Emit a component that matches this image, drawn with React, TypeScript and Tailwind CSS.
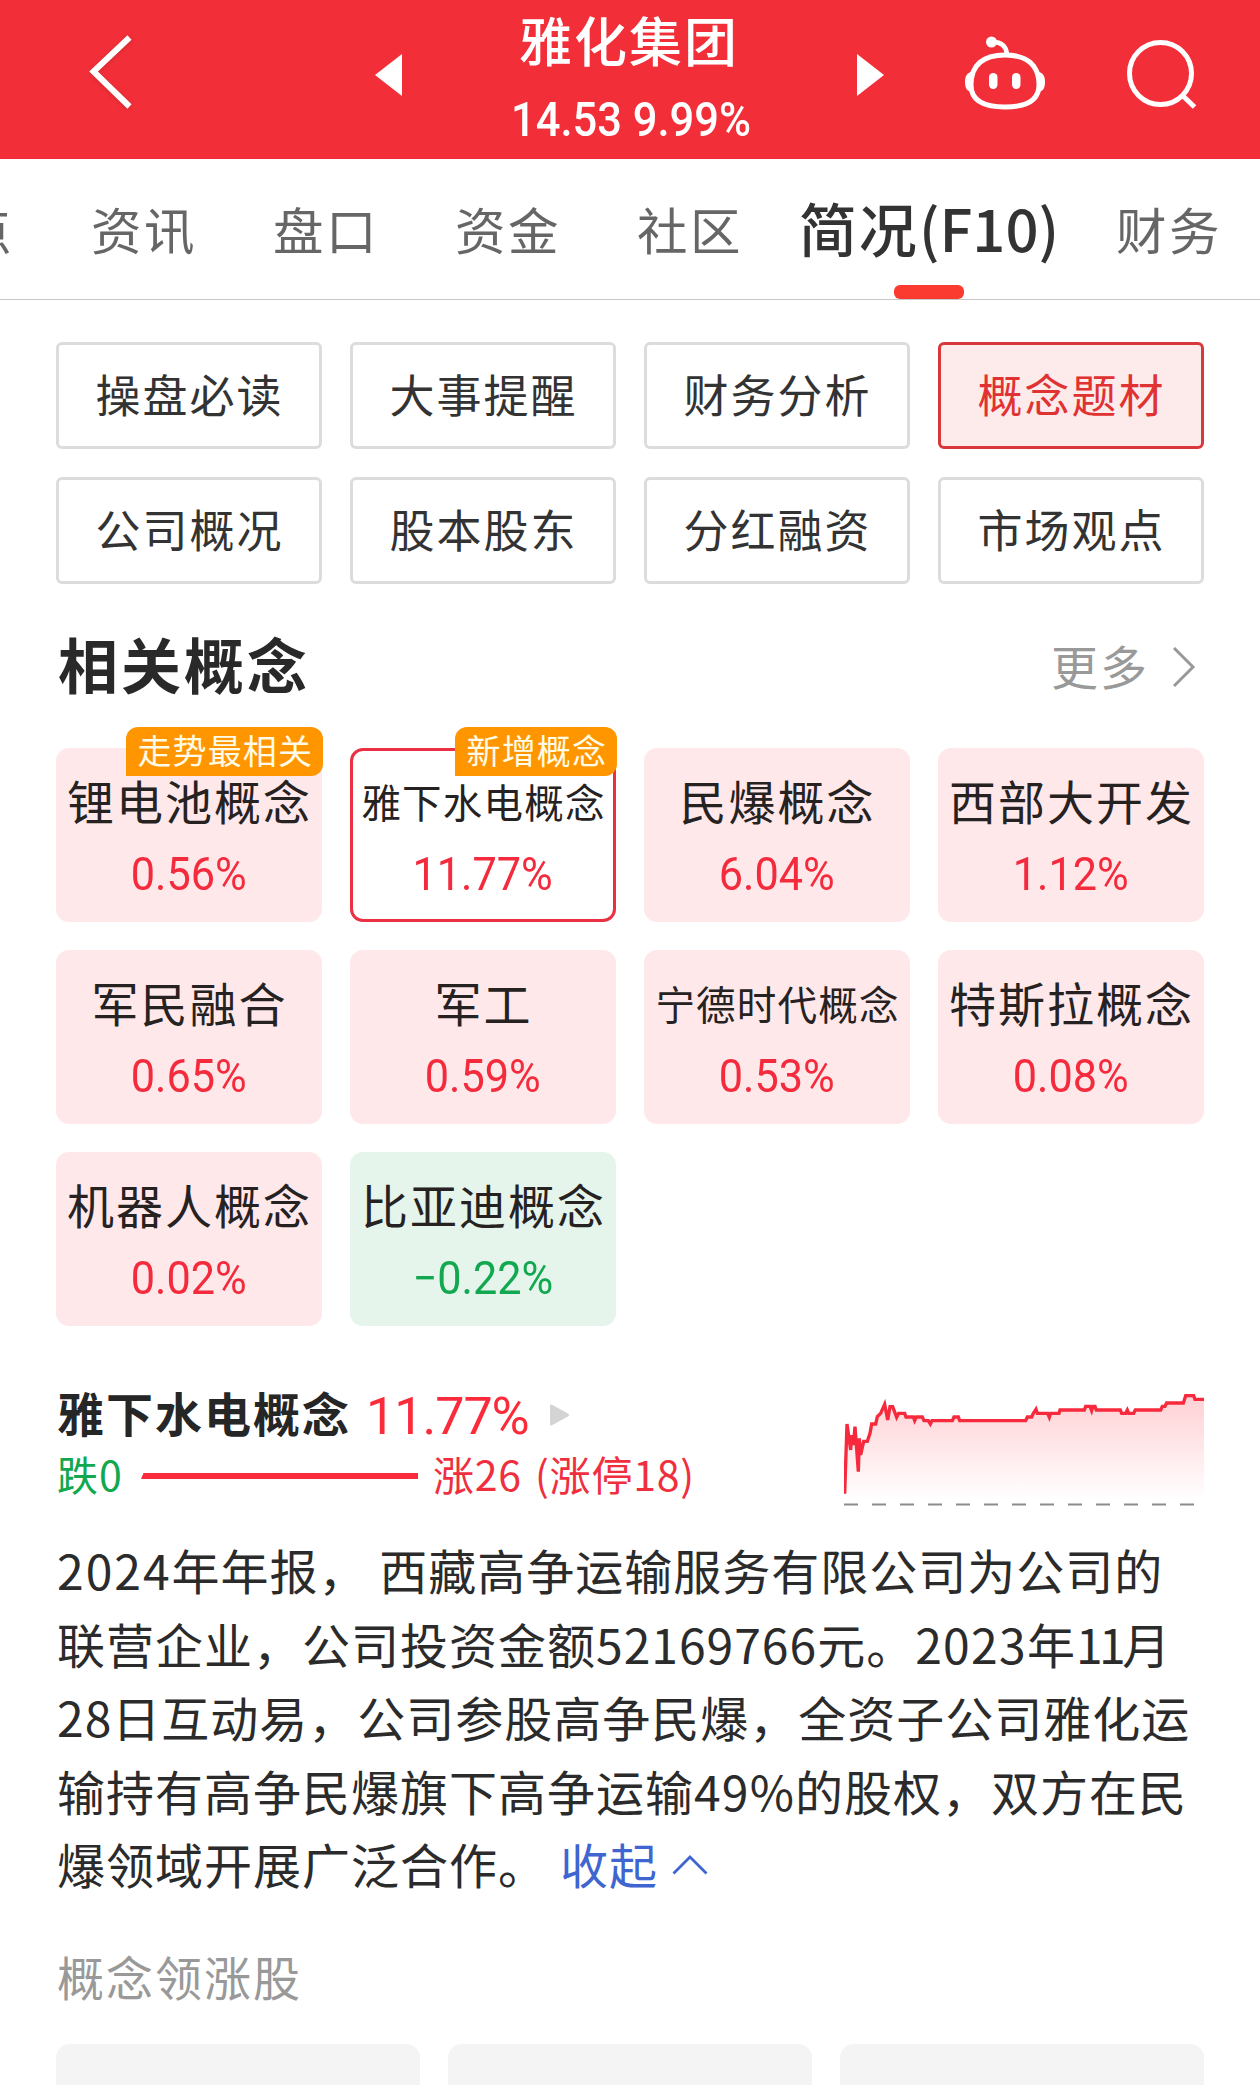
import type { ReactNode } from "react";

const NAV = ["操盘必读", "大事提醒", "财务分析", "概念题材", "公司概况", "股本股东", "分红融资", "市场观点"];

type Concept = { name: string; pct: string; badge?: string; active?: boolean; down?: boolean };

const CONCEPTS: Concept[] = [
  { name: "锂电池概念", pct: "0.56%", badge: "走势最相关" },
  { name: "雅下水电概念", pct: "11.77%", badge: "新增概念", active: true },
  { name: "民爆概念", pct: "6.04%" },
  { name: "西部大开发", pct: "1.12%" },
  { name: "军民融合", pct: "0.65%" },
  { name: "军工", pct: "0.59%" },
  { name: "宁德时代概念", pct: "0.53%" },
  { name: "特斯拉概念", pct: "0.08%" },
  { name: "机器人概念", pct: "0.02%" },
  { name: "比亚迪概念", pct: "−0.22%", down: true },
];

const TREND =
  "2,371 9,162 20,240 23,195 28,225 33,170 43,305 46,205 50,255 59,214 70,214 78,190 83,162 95,162 100,140 110,130 122,103 131,150 138,110 146,110 158,142 164,130 182,130 186,141 208,141 212,152 217,141 235,141 240,152 253,152 259,162 264,152 325,152 330,141 343,141 347,152 545,152 550,141 563,141 568,130 576,118 580,130 611,130 616,142 620,130 645,130 648,120 721,120 725,109 738,109 743,122 747,109 753,109 757,120 829,120 833,130 845,130 850,120 854,130 869,130 874,120 950,120 955,109 963,109 968,99 1018,99 1025,77 1049,77 1053,88 1080,88";

function Header() {
  return (
    <header className="flex h-[159px] items-start bg-[#f22f38] text-white">
      <svg className="mt-[32px] ml-[86px] h-[80px] w-[50px] drop-shadow-sm" viewBox="0 0 50 80" fill="none">
        <path d="M43.500 5.500 7.500 39.500l36 35" stroke="#fff" strokeWidth="6" />
      </svg>
      <svg className="mt-[54px] ml-[239px] h-[42px] w-[27px]" viewBox="0 0 27 42">
        <path d="M27 0v42L0 21z" fill="#fff" />
      </svg>
      <div className="flex w-[455px] flex-col items-center">
        <div className="mt-[4px] pr-px text-[53px] leading-[70px] font-medium tracking-[2px]">雅化集团</div>
        <div className="mt-[10px] origin-center scale-x-[0.888] pl-[3px] font-['Roboto'] text-[49px] leading-[72px] font-medium whitespace-nowrap">
          14.53 9.99%
        </div>
      </div>
      <svg className="mt-[54px] h-[42px] w-[27px]" viewBox="0 0 27 42">
        <path d="M0 0v42l27-21z" fill="#fff" />
      </svg>
      <svg className="mt-[34px] ml-[79px] h-[80px] w-[84px]" viewBox="0 0 84 80" fill="none">
        <circle cx="28.500" cy="8" r="5.500" fill="#fff" />
        <path d="M30 8c8 0 13 4 14 12" stroke="#fff" strokeWidth="4.500" />
        <path
          d="M42 21c22 0 34 10 34 30 0 14-10 22-34 22S8 65 8 51c0-20 12-30 34-30z"
          stroke="#fff"
          strokeWidth="5"
        />
        <path d="M8 38c-4 1-6 4-6 10s2 9 6 10zM76 38c4 1 6 4 6 10s-2 9-6 10z" fill="#fff" />
        <rect x="26" y="39" width="8.500" height="16" rx="4.200" fill="#fff" />
        <rect x="49" y="39" width="8.500" height="16" rx="4.200" fill="#fff" />
      </svg>
      <svg className="mt-[38px] ml-[78px] h-[76px] w-[76px]" viewBox="0 0 76 76" fill="none">
        <ellipse cx="35.500" cy="35.500" rx="31" ry="31" stroke="#fff" strokeWidth="5" />
        <path d="M57 57l12.500 12" stroke="#fff" strokeWidth="5" />
      </svg>
    </header>
  );
}

function Tab({ children }: { children: ReactNode }) {
  return <span className="w-[105px] shrink-0 text-[50.500px] leading-[60px] tracking-[2.500px] whitespace-nowrap text-[#666]">{children}</span>;
}

function Tabs() {
  return (
    <nav className="flex h-[141px] items-start gap-[77px] overflow-hidden border-b border-[#c8c8cb] pt-[39px]">
      <span className="-ml-[91px] w-[105px] shrink-0 text-right text-[50px] leading-[60px] tracking-[2.5px] text-[#666]">点</span>
      <Tab>资讯</Tab>
      <Tab>盘口</Tab>
      <Tab>资金</Tab>
      <Tab>社区</Tab>
      <div className="-mx-[21px] -mt-[5px] flex w-[262px] shrink-0 flex-col items-center">
        <span className="text-[58px] leading-[68px] font-medium tracking-[2px] whitespace-nowrap text-[#333]">
          简况<span className="tracking-[0px]">(F10)</span>
        </span>
        <span className="mt-[24px] h-[14px] w-[70px] rounded-[6px] bg-[#fb3b30]" />
      </div>
      <Tab>财务</Tab>
    </nav>
  );
}

function ConceptCard({ c }: { c: Concept }) {
  const tone = c.active ? "border-[3px] border-[#ea3042] bg-white" : c.down ? "bg-[#e5f5eb]" : "bg-[#ffe8ea]";
  const size = c.name.length > 5 ? "pt-[2px] text-[39.5px] tracking-[1.2px]" : "pb-[1px] text-[47px] tracking-[2px]";
  return (
    <div className={`relative flex h-[174px] items-center justify-center rounded-[13px] ${tone}`}>
      <div className="flex flex-col items-center">
        <div className={`flex h-[60px] items-center pl-px leading-none whitespace-nowrap text-[#262222] ${size}`}>{c.name}</div>
        <div
          className={`mt-[14px] -mb-[4px] h-[60px] scale-x-[0.94] font-['Roboto'] text-[46px] leading-[60px] ${c.down ? "text-[#12a850]" : "text-[#f42b3d]"}`}
        >
          {c.pct}
        </div>
      </div>
      {c.badge && (
        <div
          className={`absolute flex h-[49px] items-center rounded-t-[12px] rounded-br-[12px] bg-[#ff9600] pr-[10px] pb-[3px] pl-[12px] text-[34px] leading-none tracking-[1.1px] whitespace-nowrap text-[#fffbe6] ${c.active ? "-top-[24px] -right-[4px]" : "-top-[21px] -right-px"}`}
        >
          {c.badge}
        </div>
      )}
    </div>
  );
}

function TrendChart() {
  return (
    <svg className="h-[150px] w-[360px]" viewBox="0 0 1080 450" fill="none">
      <defs>
        <linearGradient id="trend" x1="0" y1="77" x2="0" y2="390" gradientUnits="userSpaceOnUse">
          <stop offset="0" stopColor="#ff2a3c" stopOpacity="0.22" />
          <stop offset="1" stopColor="#ff2a3c" stopOpacity="0" />
        </linearGradient>
      </defs>
      <polygon points={`2,390 ${TREND} 1080,390`} fill="url(#trend)" />
      <polyline points={TREND} stroke="#f62a3c" strokeWidth="10" />
      <path d="M0 403.500H1080" stroke="#8c8c8c" strokeWidth="6" strokeDasharray="42 42" />
    </svg>
  );
}

export default function App() {
  return (
    <div className="h-[2085px] w-[1260px] overflow-hidden bg-white font-['Noto_Sans_CJK_SC',sans-serif]">
      <Header />
      <Tabs />
      <main className="px-[56px]">
        <div className="mt-[42px] grid grid-cols-4 gap-[28px]">
          {NAV.map((n) => (
            <div
              key={n}
              className={`flex h-[107px] items-center justify-center rounded-[6px] border-[3px] pb-[5px] pl-px text-[45px] leading-none tracking-[2px] ${
                n === "概念题材" ? "border-[#d8383c] bg-[#fdeaea] text-[#e03232]" : "border-[#dcdcdc] text-[#333]"
              }`}
            >
              {n}
            </div>
          ))}
        </div>

        <div className="mt-[38px] flex h-[90px] items-center justify-between">
          <h2 className="pb-[8px] pl-[2px] text-[60px] leading-none font-bold tracking-[3px] text-[#292929]">相关概念</h2>
          <div className="flex items-center text-[#999]">
            <span className="pb-[6px] text-[47px] leading-none tracking-[2px]">更多</span>
            <svg className="mr-[8px] ml-[23px] h-[42px] w-[24px]" viewBox="0 0 24 42" fill="none">
              <path d="M2 2l19 19L2 40" stroke="#999" strokeWidth="3" />
            </svg>
          </div>
        </div>

        <div className="mt-[36px] grid grid-cols-4 gap-[28px]">
          {CONCEPTS.map((c) => (
            <ConceptCard key={c.name} c={c} />
          ))}
        </div>

        <div className="mt-[44px] flex h-[150px] justify-between">
          <div className="pt-[12px]">
            <div className="flex h-[62px] items-center leading-none">
              <span className="pb-[3px] pl-px text-[47px] font-bold tracking-[2px] text-[#262626]">雅下水电概念</span>
              <span className="ml-[15px] pt-[7px] font-['Roboto'] text-[52px] tracking-[-1px] text-[#fb2b3c]">11.77%</span>
              <svg className="mt-[4px] ml-[21px] h-[22px] w-[19px]" viewBox="0 0 19 22">
                <path d="M0 1.500Q0 0 2 0.800L18 9.500Q20 11 18 12.500L2 21.200Q0 22 0 20.500z" fill="#d4d4d4" />
              </svg>
            </div>
            <div className="flex h-[60px] items-center pl-px text-[41px] leading-none tracking-[1px] text-[#ef2f3e]">
              <span className="w-[84px] pb-[2px] text-[#12a850]">跌0</span>
              <svg className="mt-[3px] h-[6px] w-[277px]" viewBox="0 0 277 6">
                <path d="M2.500 0H277v6H0z" fill="#fb2b3c" />
              </svg>
              <span className="ml-[15px] pb-[2px] tracking-[0.800px] whitespace-pre">涨26 <span className="ml-[3px]">(</span>涨停18)</span>
            </div>
          </div>
          <TrendChart />
        </div>

        <div className="mt-[13px] ml-px text-[48px] leading-[73.5px] tracking-[1px] whitespace-pre text-[#2b2b2b]">
          <div><span className="tracking-[2px]">2024</span>年年报， 西藏高争运输服务有限公司为公司的</div>
          <div>联营企业，公司投资金额<span className="tracking-[1px]">52169766</span>元。<span className="tracking-[1.3px]">2023</span>年<span className="tracking-[-3.500px]">11</span>月</div>
          <div><span className="tracking-[1px]">28</span>日互动易，公司参股高争民爆，全资子公司雅化运</div>
          <div>输持有高争民爆旗下高争运输<span className="tracking-[1.2px]">49%</span>的股权，双方在民</div>
          <div className="flex items-center">
            爆领域开展广泛合作。
            <span className="ml-[13px] text-[#3f66d0]">收起</span>
            <svg className="mt-[3px] ml-[14px] h-[20px] w-[36px]" viewBox="0 0 36 20" fill="none">
              <path d="M1.500 18.500L18 2l16.500 16.500" stroke="#3f66d0" strokeWidth="2.800" />
            </svg>
          </div>
        </div>

        <div className="mt-[39px] ml-px text-[47px] leading-[72px] tracking-[2px] text-[#999]">概念领涨股</div>

        <div className="mt-[32px] grid grid-cols-3 gap-[28px]">
          <div className="h-[120px] rounded-[14px] bg-[#f4f4f4]" />
          <div className="h-[120px] rounded-[14px] bg-[#f4f4f4]" />
          <div className="h-[120px] rounded-[14px] bg-[#f4f4f4]" />
        </div>
      </main>
    </div>
  );
}
